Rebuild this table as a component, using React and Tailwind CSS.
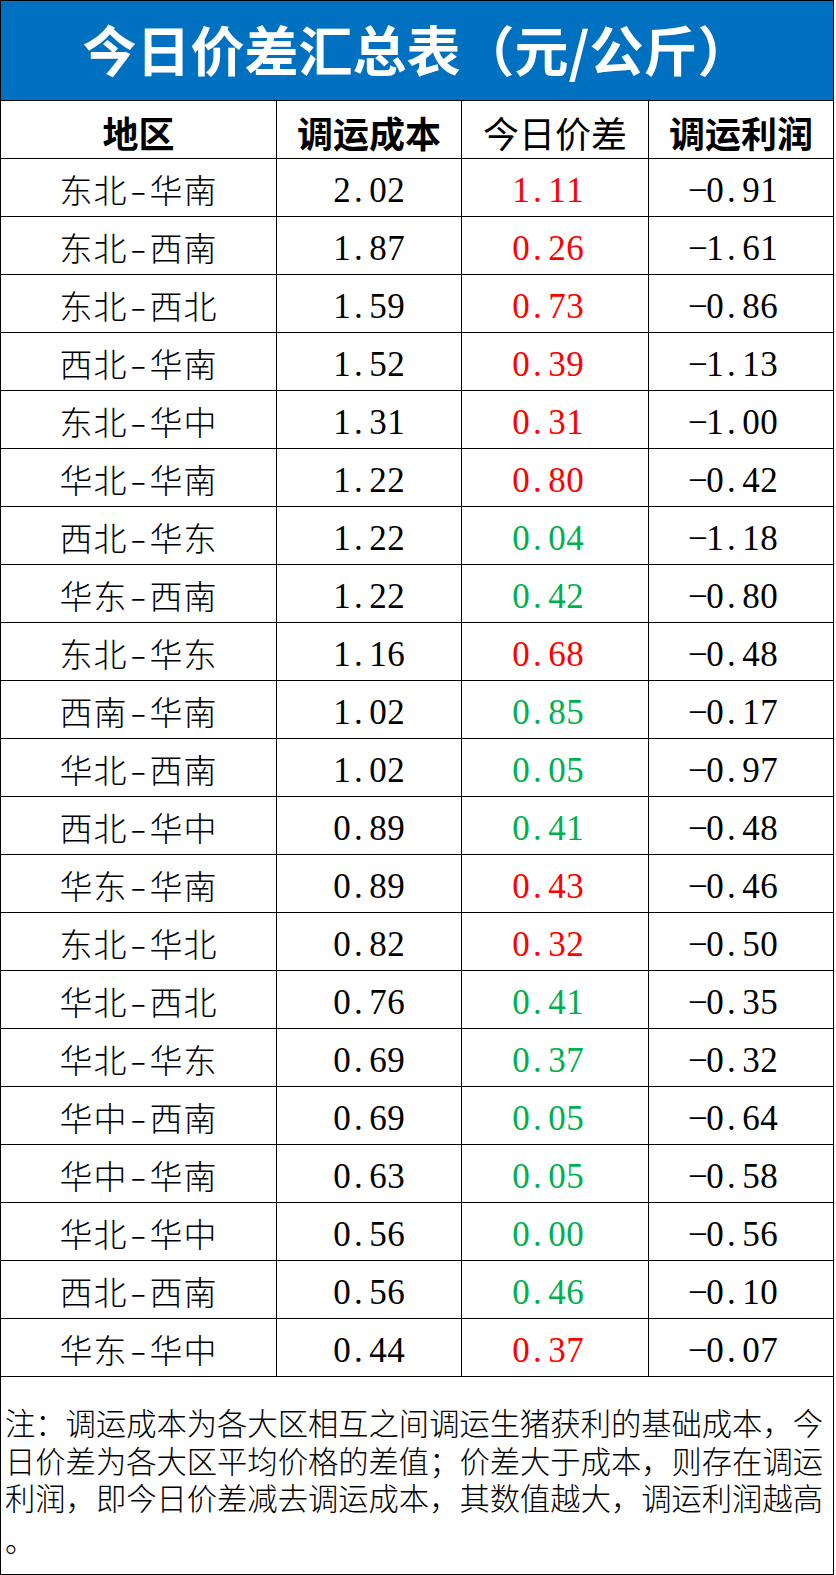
import React from "react";

const rows = [
  ["东北-华南", "2.02", "1.11", "r", "-0.91"],
  ["东北-西南", "1.87", "0.26", "r", "-1.61"],
  ["东北-西北", "1.59", "0.73", "r", "-0.86"],
  ["西北-华南", "1.52", "0.39", "r", "-1.13"],
  ["东北-华中", "1.31", "0.31", "r", "-1.00"],
  ["华北-华南", "1.22", "0.80", "r", "-0.42"],
  ["西北-华东", "1.22", "0.04", "g", "-1.18"],
  ["华东-西南", "1.22", "0.42", "g", "-0.80"],
  ["东北-华东", "1.16", "0.68", "r", "-0.48"],
  ["西南-华南", "1.02", "0.85", "g", "-0.17"],
  ["华北-西南", "1.02", "0.05", "g", "-0.97"],
  ["西北-华中", "0.89", "0.41", "g", "-0.48"],
  ["华东-华南", "0.89", "0.43", "r", "-0.46"],
  ["东北-华北", "0.82", "0.32", "r", "-0.50"],
  ["华北-西北", "0.76", "0.41", "g", "-0.35"],
  ["华北-华东", "0.69", "0.37", "g", "-0.32"],
  ["华中-西南", "0.69", "0.05", "g", "-0.64"],
  ["华中-华南", "0.63", "0.05", "g", "-0.58"],
  ["华北-华中", "0.56", "0.00", "g", "-0.56"],
  ["西北-西南", "0.56", "0.46", "g", "-0.10"],
  ["华东-华中", "0.44", "0.37", "r", "-0.07"],
];

function Num({ v }) {
  return (
    <span className="inline-flex font-['Liberation_Serif',serif] text-[35px] leading-none">
      {v.split("").map((c, i) =>
        c === "." ? (
          <span key={i} className="inline-block w-[18px] text-left pl-[3px]">.</span>
        ) : c === "-" ? (
          <span key={i} className="inline-block w-[18px] text-center">−</span>
        ) : (
          <span key={i} className="inline-block w-[18px] text-center">{c}</span>
        )
      )}
    </span>
  );
}

function Region({ t }) {
  const [a, b] = t.split("-");
  return (
    <span className="inline-flex items-center tracking-[1px]">
      <span>{a}</span>
      <span className="inline-block w-[22px] text-center scale-x-150">-</span>
      <span>{b}</span>
    </span>
  );
}

const cjk = "font-['Noto_Sans_CJK_SC',sans-serif]";

export default function App() {
  return (
    <div className="w-[836px] h-[1575px] bg-white">
      <div className="w-[834px] border-l border-t border-b border-black">
        <div className={`h-[100px] bg-[#0070C0] border-r border-b border-black flex items-center justify-center text-white text-[54px] font-bold ${cjk}`}>
          <span className="pb-[4px]">今日价差汇总表（元/公斤）</span>
        </div>
        <div className="grid grid-cols-[276px_185px_187px_185px]">
          {["地区", "调运成本", "今日价差", "调运利润"].map((h, i) => (
            <div
              key={h}
              className={`h-[58px] border-r border-b border-black flex items-center justify-center text-[36px] text-black pt-[4px] ${cjk} ${i === 2 ? "font-normal" : "font-bold"}`}
            >
              {h}
            </div>
          ))}
          {rows.map((r, idx) => (
            <React.Fragment key={idx}>
              <div className={`h-[58px] border-r border-b border-black flex items-center justify-center text-[33px] font-light text-black pt-[5px] ${cjk}`}>
                <Region t={r[0]} />
              </div>
              <div className="h-[58px] border-r border-b border-black flex items-center justify-center text-black pt-[5px]">
                <Num v={r[1]} />
              </div>
              <div className={`h-[58px] border-r border-b border-black flex items-center justify-center pt-[5px] pr-[14px] ${r[3] === "r" ? "text-[#FF0000]" : "text-[#00B050]"}`}>
                <Num v={r[2]} />
              </div>
              <div className="h-[58px] border-r border-b border-black flex items-center justify-center text-black pt-[5px] pr-[16px]">
                <Num v={r[4]} />
              </div>
            </React.Fragment>
          ))}
        </div>
        <div className={`h-[197px] border-r border-black pt-[27px] pl-[4px] text-[30.3px] leading-[37.5px] font-light text-black ${cjk}`}>
          <div className="whitespace-nowrap">注：调运成本为各大区相互之间调运生猪获利的基础成本，今</div>
          <div className="whitespace-nowrap">日价差为各大区平均价格的差值；价差大于成本，则存在调运</div>
          <div className="whitespace-nowrap">利润，即今日价差减去调运成本，其数值越大，调运利润越高</div>
          <div className="whitespace-nowrap pt-[4px]">。</div>
        </div>
      </div>
    </div>
  );
}
